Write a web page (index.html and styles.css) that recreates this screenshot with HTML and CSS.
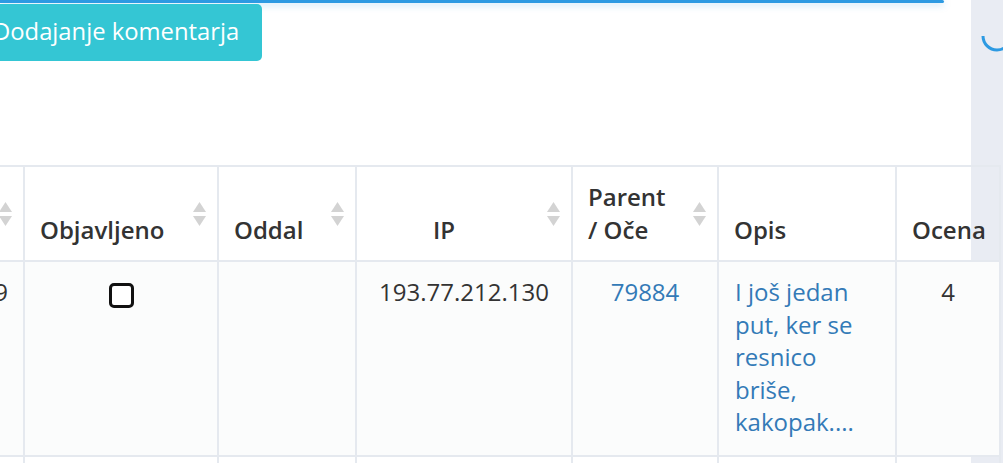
FILE: index.html
```html
<!DOCTYPE html>
<html lang="sl">
<head>
<meta charset="utf-8">
<title>Komentarji</title>
<link rel="stylesheet" href="styles.css">
</head>
<body>
<div class="side-panel">
  <svg class="spinner" width="32" height="60" viewBox="0 0 32 60"><path d="M12 36 A14 14 0 0 0 40 36" fill="none" stroke="#2d9ae2" stroke-width="3"/></svg>
</div>
<div class="topbar"></div>
<div class="toolbar">
  <a class="btn-add">Dodajanje komentarja</a>
</div>
<table class="grid">
  <thead>
    <tr>
      <th class="c1 sortable"><span class="sort"><svg width="13" height="25" viewBox="0 0 13 25"><polygon points="6.5,0 13,10 0,10"/><polygon points="0,14 13,14 6.5,24"/></svg></span></th>
      <th class="c2 sortable">Objavljeno<span class="sort"><svg width="13" height="25" viewBox="0 0 13 25"><polygon points="6.5,0 13,10 0,10"/><polygon points="0,14 13,14 6.5,24"/></svg></span></th>
      <th class="c3 sortable">Oddal<span class="sort"><svg width="13" height="25" viewBox="0 0 13 25"><polygon points="6.5,0 13,10 0,10"/><polygon points="0,14 13,14 6.5,24"/></svg></span></th>
      <th class="c4 sortable ip">IP<span class="sort"><svg width="13" height="25" viewBox="0 0 13 25"><polygon points="6.5,0 13,10 0,10"/><polygon points="0,14 13,14 6.5,24"/></svg></span></th>
      <th class="c5 sortable">Parent<br>/ Oče<span class="sort"><svg width="13" height="25" viewBox="0 0 13 25"><polygon points="6.5,0 13,10 0,10"/><polygon points="0,14 13,14 6.5,24"/></svg></span></th>
      <th class="c6">Opis</th>
      <th class="c7">Ocena</th>
    </tr>
  </thead>
  <tbody>
    <tr class="odd">
      <td class="num">79889</td>
      <td><span class="check"></span></td>
      <td></td>
      <td>193.77.212.130</td>
      <td><a href="#">79884</a></td>
      <td class="text"><a href="#">I još jedan put, ker se resnico briše, kakopak....</a></td>
      <td>4</td>
    </tr>
    <tr class="even">
      <td></td><td></td><td></td><td></td><td></td><td></td><td></td>
    </tr>
  </tbody>
</table>
</body>
</html>
```
FILE: styles.css
```css
html, body {
  margin: 0;
  padding: 0;
  background: #fff;
  overflow: hidden;
}
body {
  font-family: "Open Sans", "Liberation Sans", sans-serif;
  font-size: 24px;
  line-height: 32.5px;
  color: #333;
  width: 1003px;
  height: 463px;
  position: relative;
}
.side-panel {
  position: absolute;
  top: 0;
  right: 0;
  width: 32px;
  height: 463px;
  background: #e9ecf3;
  z-index: 0;
}
.spinner {
  position: absolute;
  left: 0;
  top: 0;
}
.topbar {
  position: relative;
  z-index: 2;
  width: 944px;
  height: 3px;
  background: #2d9ae2;
  border-radius: 0 2px 2px 0;
  box-shadow: 0 2px 7px rgba(45, 154, 226, 0.35);
}
.toolbar {
  position: relative;
  z-index: 2;
  padding-top: 1px;
  height: 161px;
}
.btn-add {
  display: inline-block;
  margin-left: -28px;
  height: 57px;
  padding: 0 23px 0 21px;
  line-height: 55px;
  background: #34c6d4;
  color: #fff;
  border-radius: 0 5px 5px 0;
  font-size: 23.8px;
}
.grid {
  position: relative;
  z-index: 1;
  margin-left: -120px;
  border-collapse: separate;
  border-spacing: 0;
  table-layout: fixed;
  width: 1121px;
}
.grid th, .grid td {
  box-sizing: border-box;
  border-left: 2px solid #e5e9ef;
  padding: 14px 15px 14px 15px;
}
.grid th:last-child, .grid td:last-child {
  border-right: 2px solid #e5e9ef;
}
.grid th {
  position: relative;
  height: 96px;
  border-top: 2px solid #e5e9ef;
  border-bottom: 2px solid #e5e9ef;
  vertical-align: bottom;
  text-align: left;
  font-weight: 600;
  color: #333;
  background: transparent;
  padding-bottom: 14px;
}
.grid th.ip {
  text-align: center;
  padding-right: 55px;
}
.c1 { width: 143px; }
.c2 { width: 194px; }
.c3 { width: 138px; }
.c4 { width: 216px; }
.c5 { width: 146px; }
.c6 { width: 178px; }
.c7 { width: 106px; }
.sort {
  position: absolute;
  right: 11px;
  top: 50%;
  margin-top: -12px;
  width: 13px;
  height: 25px;
  line-height: 0;
}
.sort svg {
  fill: #d3d3d3;
}
.grid td {
  vertical-align: top;
  text-align: center;
  border-bottom: 2px solid #e5e9ef;
}
.grid td.text {
  padding-left: 16px;
  text-align: left;
}
.grid tr.odd td {
  height: 195px;
  background: #fbfcfc;
}
.grid tr.even td {
  height: 40px;
  background: transparent;
}
.grid td.num {
  text-align: right;
}
.grid a {
  color: #337ab7;
  text-decoration: none;
}
.check {
  display: block;
  box-sizing: border-box;
  width: 25px;
  height: 25px;
  margin: 7px auto 0;
  border: 3.5px solid #111;
  border-radius: 5px;
  background: #fff;
}
```
